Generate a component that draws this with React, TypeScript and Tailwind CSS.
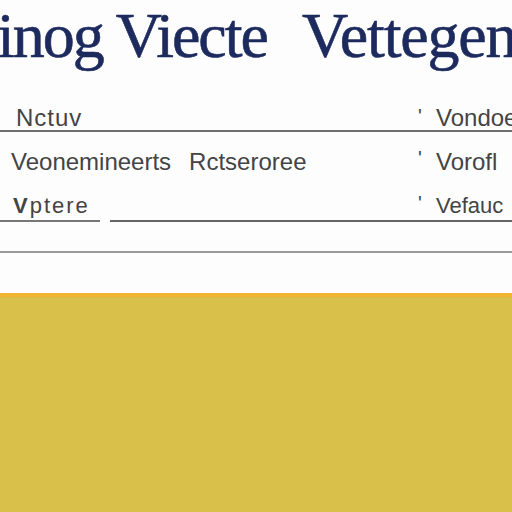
import React from 'react';

const ROWS = [
  { left: 'Nctuv', mid: '', right: 'Vondoe' },
  { left: 'Veonemineerts', mid: 'Rctseroree', right: 'Vorofl' },
  { left: 'Vptere', mid: '', right: 'Vefauc' },
];

function RightCell({ text }: { text: string }) {
  return (
    <span className="ml-auto w-[94px] shrink-0 flex whitespace-nowrap overflow-hidden">
      <span className="w-[18px] shrink-0 text-[20px] leading-[20px] self-start">'</span>
      {text}
    </span>
  );
}

export default function App() {
  return (
    <div className="w-[512px] h-[512px] overflow-hidden bg-[#fdfdfd] flex flex-col font-['Liberation_Sans',sans-serif]">
      {/* Title */}
      <div className="h-[88px] flex items-start whitespace-nowrap overflow-hidden font-['Liberation_Serif',serif] text-[64px] leading-[72px] tracking-[-2px] text-[#1c2a5e] [-webkit-text-stroke:0.6px_#1c2a5e]">
        <span className="-ml-[3px]">inog</span>
        <span className="ml-[13px]">Viecte</span>
        <span className="ml-[35px] tracking-[-1.2px]">Vettegen</span>
      </div>

      {/* Row 1 */}
      <div className="h-[44px] flex items-end border-b-2 border-[#6e6e6e] text-[24px] leading-[24px] text-[#444]">
        <span className="ml-[16px] tracking-[1px]">{ROWS[0].left}</span>
        <RightCell text={ROWS[0].right} />
      </div>

      {/* Row 2 */}
      <div className="h-[48px] flex items-center pt-[11px] text-[24px] leading-[28px] text-[#444]">
        <span className="ml-[11px]">{ROWS[1].left}</span>
        <span className="ml-[18px]">{ROWS[1].mid}</span>
        <RightCell text={ROWS[1].right} />
      </div>

      {/* Row 3 */}
      <div className="h-[40px] flex items-end pb-[1px] text-[22px] leading-[26px] text-[#444]">
        <span className="ml-[13px] tracking-[2px]">
          <span className="font-bold">V</span>ptere
        </span>
        <RightCell text={ROWS[2].right} />
      </div>
      <div className="flex gap-[10px]">
        <div className="w-[100px] h-[2px] bg-[#777]" />
        <div className="flex-1 h-[2px] bg-[#666]" />
      </div>

      <div className="h-[29px]" />
      <div className="h-[2px] bg-[#9a9a9a]" />

      <div className="h-[40px]" />
      {/* Yellow footer */}
      <div className="h-[4px] bg-[#f2b42c]" />
      <div className="flex-1 bg-[#d9c04b]" />
    </div>
  );
}
